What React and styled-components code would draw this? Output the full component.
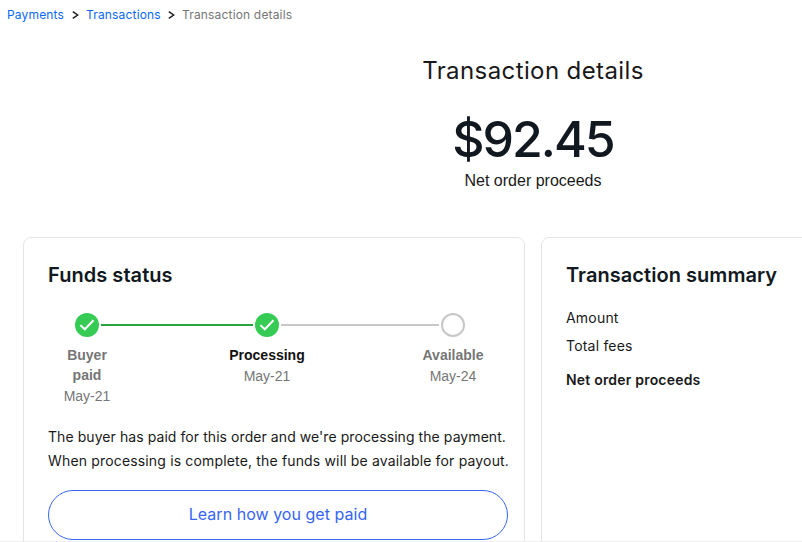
import React from 'react'
import styled, { createGlobalStyle } from 'styled-components'

const steps = [
    { label: 'Buyer paid', date: 'May-21', done: true },
    { label: 'Processing', date: 'May-21', done: true, current: true },
    { label: 'Available', date: 'May-24' },
]

function StepIcon({ done }) {
    return (
        <Icon viewBox="0 0 24 24">
            {done ? (
                <>
                    <circle cx="12" cy="12" r="12" fill="#36cb55" />
                    <path d="M5.4 12.1l4.4 4.2 8.7-9" fill="none" stroke="#fff" strokeWidth="2" />
                </>
            ) : (
                <circle cx="12" cy="12" r="11" fill="#fff" stroke="#c7c7c7" strokeWidth="2" />
            )}
        </Icon>
    )
}

function Separator() {
    return (
        <Chevron viewBox="0 0 7 8">
            <path d="M.8 .7l4.9 3.3L.8 7.3" fill="none" stroke="#191919" strokeWidth="1.4" />
        </Chevron>
    )
}

function App() {
    return (
        <Page>
            <GlobalStyle />
            <Breadcrumbs>
                <Crumb $width={57}>Payments</Crumb>
                <Separator />
                <Crumb $width={74}>Transactions</Crumb>
                <Separator />
                <Crumb as="span" $current>Transaction details</Crumb>
            </Breadcrumbs>
            <Summary>
                <Title>Transaction details</Title>
                <Total>$92.45</Total>
                <TotalLabel>Net order proceeds</TotalLabel>
            </Summary>
            <Cards>
                <Card>
                    <CardTitle>Funds status</CardTitle>
                    <Track>
                        <StepIcon done />
                        <Line $width={152} $done />
                        <StepIcon done />
                        <Line $width={158} />
                        <StepIcon />
                    </Track>
                    <Steps>
                        {steps.map((step) => (
                            <Step key={step.label}>
                                <StepLabel $current={step.current}>{step.label}</StepLabel>
                                <StepDate>{step.date}</StepDate>
                            </Step>
                        ))}
                    </Steps>
                    <Message>
                        <MessageLine $spacing="0.07px">The buyer has paid for this order and we're processing the payment.</MessageLine>
                        <MessageLine $spacing="0.16px">When processing is complete, the funds will be available for payout.</MessageLine>
                    </Message>
                    <LearnButton>Learn how you get paid</LearnButton>
                </Card>
                <Card>
                    <CardTitle>Transaction summary</CardTitle>
                    <Rows>
                        <Row>Amount</Row>
                        <Row>Total fees</Row>
                        <Row $total>Net order proceeds</Row>
                    </Rows>
                </Card>
            </Cards>
        </Page>
    )
}

export default App

const GlobalStyle = createGlobalStyle`
    * {
        box-sizing: border-box;
    }

    body {
        margin: 0;
        overflow: hidden;
        background-color: #fff;
    }
`;

const Page = styled.div`
    width: 802px;
    height: 542px;
    overflow: hidden;
    border-bottom: 1px solid #efefef;
    color: #191919;
    font-family: Inter, "Liberation Sans", sans-serif;
`;

const Breadcrumbs = styled.nav`
    display: flex;
    align-items: center;
    height: 30px;
    padding-left: 7px;
`;

const Crumb = styled.a`
    width: ${(props) => (props.$width ? `${props.$width}px` : 'auto')};
    color: ${(props) => (props.$current ? '#767676' : '#0968f6')};
    font-size: 12px;
    line-height: 16px;
    letter-spacing: 0.17px;
    white-space: nowrap;
`;

const Chevron = styled.svg`
    width: 7px;
    height: 8px;
    margin: 0 7px 0 8px;
`;

const Summary = styled.header`
    display: flex;
    flex-direction: column;
    align-items: center;
    width: 220px;
    height: 207px;
    margin-left: 423px;
    padding-top: 25px;
    white-space: nowrap;
`;

const Title = styled.h1`
    margin: 0;
    font-size: 24px;
    font-weight: 400;
    line-height: 32px;
    letter-spacing: 0.4px;
`;

const Total = styled.div`
    margin-top: 20px;
    color: #111820;
    font-size: 50px;
    font-weight: 500;
    line-height: 64px;
    letter-spacing: -2px;
`;

const TotalLabel = styled.div`
    font-family: "Liberation Sans", sans-serif;
    font-size: 16px;
    line-height: 20px;
`;

const Cards = styled.main`
    display: grid;
    grid-template-columns: 502px 502px;
    gap: 16px;
    padding-left: 23px;
`;

const Card = styled.section`
    height: 340px;
    padding: 23px 16px 0 24px;
    border: 1px solid #e5e5e5;
    border-radius: 8px;
`;

const CardTitle = styled.h2`
    margin: 0;
    color: #111820;
    font-size: 20px;
    font-weight: 600;
    line-height: 28px;
    letter-spacing: 0.05px;
    white-space: nowrap;
`;

const Track = styled.div`
    display: flex;
    align-items: center;
    margin-top: 24px;
    padding-left: 27px;
`;

const Icon = styled.svg`
    flex: none;
    width: 24px;
    height: 24px;
`;

const Line = styled.div`
    width: ${(props) => props.$width}px;
    height: 2px;
    margin: 0 2px;
    background-color: ${(props) => (props.$done ? '#2aa53c' : '#c7c7c7')};
`;

const Steps = styled.div`
    display: grid;
    grid-template-columns: 78px 282px 90px;
    height: 88px;
    padding-top: 8px;
    font-family: "Liberation Sans", sans-serif;
    font-size: 14px;
    text-align: center;
`;

const Step = styled.div`
    padding: 0 12px;
`;

const StepLabel = styled.div`
    color: ${(props) => (props.$current ? '#111' : '#767676')};
    font-weight: 700;
    line-height: 20px;
`;

const StepDate = styled.div`
    margin-top: 1px;
    color: #767676;
    line-height: 20px;
    white-space: nowrap;
`;

const Message = styled.p`
    display: flex;
    flex-direction: column;
    margin: 0;
    font-size: 14px;
    line-height: 24px;
    white-space: nowrap;
`;

const MessageLine = styled.span`
    letter-spacing: ${(props) => props.$spacing};
`;

const LearnButton = styled.button`
    width: 460px;
    height: 50px;
    margin-top: 17px;
    padding: 0 0 2px;
    border: 1px solid #3665f3;
    border-radius: 25px;
    background-color: #fff;
    color: #3665f3;
    font-family: inherit;
    font-size: 16px;
    letter-spacing: 0.03px;
`;

const Rows = styled.div`
    display: flex;
    flex-direction: column;
    gap: 8px;
    margin-top: 19px;
`;

const Row = styled.div`
    margin-top: ${(props) => (props.$total ? '6px' : '0')};
    font-size: 14px;
    font-weight: ${(props) => (props.$total ? 600 : 400)};
    line-height: 20px;
    letter-spacing: 0.2px;
`;
